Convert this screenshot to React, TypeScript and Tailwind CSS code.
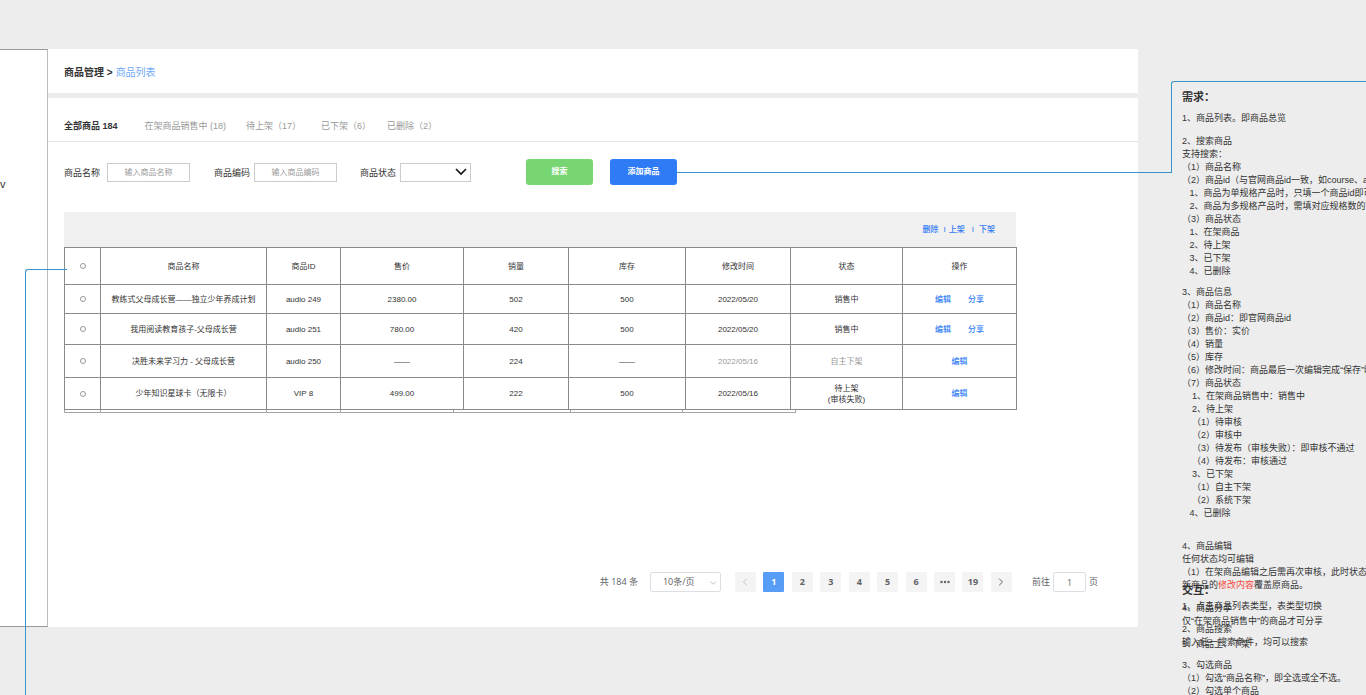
import React from "react";
import { ChevronDown, ChevronLeft, ChevronRight, Ellipsis } from "lucide-react";

const tabs = [
    { label: "全部商品 184", className: "font-bold text-[#333]" },
    { label: "在架商品销售中 (18)", className: "ml-[27px] text-[#999]" },
    { label: "待上架（17）", className: "ml-5 text-[#999]" },
    { label: "已下架（6）", className: "ml-5 text-[#999]" },
    { label: "已删除（2）", className: "ml-4 text-[#999]" },
];

const columns = [
    { title: "商品名称", width: "w-[166px]" },
    { title: "商品ID", width: "w-[74px]" },
    { title: "售价", width: "w-[123px]" },
    { title: "销量", width: "w-[105px]" },
    { title: "库存", width: "w-[117px]" },
    { title: "修改时间", width: "w-[105px]" },
    { title: "状态", width: "w-[112px]" },
    { title: "操作", width: "w-[114px]" },
];

const products = [
    {
        name: "教练式父母成长营——独立少年养成计划",
        id: "audio 249",
        price: "2380.00",
        sales: "502",
        stock: "500",
        date: "2022/05/20",
        status: ["销售中"],
        actions: ["编辑", "分享"],
        muted: false,
        height: "h-[29px]",
    },
    {
        name: "我用阅读教育孩子-父母成长营",
        id: "audio 251",
        price: "780.00",
        sales: "420",
        stock: "500",
        date: "2022/05/20",
        status: ["销售中"],
        actions: ["编辑", "分享"],
        muted: false,
        height: "h-[31px]",
    },
    {
        name: "决胜未来学习力 - 父母成长营",
        id: "audio 250",
        price: "——",
        sales: "224",
        stock: "——",
        date: "2022/05/16",
        status: ["自主下架"],
        actions: ["编辑"],
        muted: true,
        height: "h-[33px]",
    },
    {
        name: "少年知识星球卡（无限卡）",
        id: "VIP 8",
        price: "499.00",
        sales: "222",
        stock: "500",
        date: "2022/05/16",
        status: ["待上架", "(审核失败)"],
        actions: ["编辑"],
        muted: false,
        height: "h-[32px]",
    },
];

const pages = ["1", "2", "3", "4", "5", "6", "...", "19"];

const searchNotes = [
    "2、搜索商品",
    "支持搜索：",
    "（1）商品名称",
    "（2）商品id（与官网商品id一致，如course、audio）",
    "   1、商品为单规格产品时，只填一个商品id即可",
    "   2、商品为多规格产品时，需填对应规格数的商品id",
    "（3）商品状态",
    "   1、在架商品",
    "   2、待上架",
    "   3、已下架",
    "   4、已删除",
];

const infoNotes = [
    "3、商品信息",
    "（1）商品名称",
    "（2）商品id：即官网商品id",
    "（3）售价：实价",
    "（4）销量",
    "（5）库存",
    "（6）修改时间：商品最后一次编辑完成“保存”时间",
    "（7）商品状态",
    "    1、在架商品销售中：销售中",
    "    2、待上架",
    "    （1）待审核",
    "    （2）审核中",
    "    （3）待发布（审核失败）：即审核不通过",
    "    （4）待发布：审核通过",
    "    3、已下架",
    "    （1）自主下架",
    "    （2）系统下架",
    "   4、已删除",
];

function Lines({ items }: { items: string[] }) {
    return (
        <>
            {items.map((line, index) => (
                <p key={index}>{line}</p>
            ))}
        </>
    );
}

function Tabs() {
    return (
        <nav className="flex h-11 items-center border-b border-[#e4e4e4] pt-3.5 pl-4 text-[9px]">
            {tabs.map((tab) => (
                <a key={tab.label} href="#" className={tab.className}>
                    {tab.label}
                </a>
            ))}
        </nav>
    );
}

function SearchForm() {
    return (
        <form className="flex items-center pt-[17px] pl-4 text-[9px] text-[#333]">
            <label htmlFor="name" className="pt-1">商品名称</label>
            <input
                id="name"
                placeholder="输入商品名称"
                className="ml-[7px] h-[19px] w-[83px] border border-[#ccc] bg-white text-center text-[8px] placeholder:text-[#999]"
            />
            <label htmlFor="code" className="ml-6 pt-1">商品编码</label>
            <input
                id="code"
                placeholder="输入商品编码"
                className="ml-1 h-[19px] w-[83px] border border-[#ccc] bg-white text-center text-[8px] placeholder:text-[#999]"
            />
            <label htmlFor="status" className="ml-[23px] pt-1">商品状态</label>
            <div className="relative ml-1">
                <select
                    id="status"
                    className="block h-[19px] w-[71px] appearance-none border border-[#ccc] bg-white"
                ></select>
                <svg
                    viewBox="0 0 12 8"
                    className="pointer-events-none absolute top-[5px] right-[4px] h-2 w-3"
                    fill="none"
                    stroke="#111"
                    strokeWidth="1.6"
                >
                    <path d="M1 1l5 5 5-5" />
                </svg>
            </div>
            <button type="button" className="ml-[55px] h-[26px] w-[67px] rounded-[3px] bg-[#77d572] text-[8px] font-bold text-white">
                搜索
            </button>
            <button type="button" className="ml-[17px] h-[26px] w-[67px] rounded-[3px] bg-[#2f7bf6] text-[8px] font-bold text-white">
                添加商品
            </button>
        </form>
    );
}

function ProductTable() {
    return (
        <div className="mt-[27px] mr-[122px] ml-4">
            <div className="flex h-[35px] items-center justify-end bg-[#f0f0f0] pr-[21px] text-[8px] font-medium text-[#2f7bf6]">
                <button>删除</button>
                <span className="ml-[5px]">I</span>
                <button className="ml-[3px]">上架</button>
                <span className="ml-[7px]">I</span>
                <button className="ml-[5px]">下架</button>
            </div>

            <table className="w-full table-fixed border-collapse text-center text-[8px] leading-[11px] text-[#333]">
                <thead>
                    <tr className="h-[37px]">
                        <th className="w-9 border border-[#8a8a8a] p-0">
                            <input
                                type="checkbox"
                                aria-label="全选"
                                className="block size-1.5 mx-auto appearance-none rounded-full border border-[#999]"
                            />
                        </th>
                        {columns.map((column) => (
                            <th key={column.title} className={`${column.width} border border-[#8a8a8a] p-0 font-normal`}>
                                {column.title}
                            </th>
                        ))}
                    </tr>
                </thead>
                <tbody>
                    {products.map((product) => (
                        <tr key={product.id} className={product.height}>
                            <td className="border border-[#8a8a8a] p-0">
                                <input
                                    type="checkbox"
                                    aria-label={product.name}
                                    className="block size-1.5 mx-auto appearance-none rounded-full border border-[#999]"
                                />
                            </td>
                            <td className="border border-[#8a8a8a] p-0">{product.name}</td>
                            <td className="border border-[#8a8a8a] p-0">{product.id}</td>
                            <td className="border border-[#8a8a8a] p-0">{product.price}</td>
                            <td className="border border-[#8a8a8a] p-0">{product.sales}</td>
                            <td className="border border-[#8a8a8a] p-0">{product.stock}</td>
                            <td className={`border border-[#8a8a8a] p-0 ${product.muted ? "text-[#999]" : ""}`}>
                                {product.date}
                            </td>
                            <td className={`border border-[#8a8a8a] p-0 ${product.muted ? "text-[#999]" : ""}`}>
                                <Lines items={product.status} />
                            </td>
                            <td className="border border-[#8a8a8a] p-0">
                                <div className="flex justify-center gap-[17px] font-medium text-[#2f7bf6]">
                                    {product.actions.map((action) => (
                                        <a key={action} href="#">{action}</a>
                                    ))}
                                </div>
                            </td>
                        </tr>
                    ))}
                </tbody>
            </table>

            {/* Edge of the table underneath */}
            <div className="flex h-[3px] w-[732px] border-b border-l border-[#a5a5a5]">
                <span className="w-9 border-r border-[#a5a5a5]"></span>
                <span className="w-[166px] border-r border-[#a5a5a5]"></span>
                <span className="w-[74px] border-r border-[#a5a5a5]"></span>
                <span className="w-[113px] border-r border-[#a5a5a5]"></span>
                <span className="w-[117px] border-r border-[#a5a5a5]"></span>
                <span className="w-[112px] border-r border-[#a5a5a5]"></span>
                <span className="flex-1 border-r border-[#a5a5a5]"></span>
            </div>
        </div>
    );
}

function Pagination() {
    return (
        <div className="mt-[159px] flex h-5 items-center justify-end pr-10 font-['Open_Sans','Noto_Sans_CJK_SC',sans-serif] text-[9px] text-[#606266]">
            <span>共 184 条</span>
            <div className="relative ml-3">
                <select
                    aria-label="每页条数"
                    className="block h-5 w-[71px] appearance-none rounded-[2px] border border-[#dcdfe6] bg-white pl-3 text-[9px]"
                >
                    <option>10条/页</option>
                </select>
                <ChevronDown className="pointer-events-none absolute top-[6px] right-[3px] size-2.5 text-[#b4b8c0]" />
            </div>
            <div className="ml-[14px] flex w-[277px] justify-between font-bold">
                <button aria-label="上一页" className="flex h-5 w-[21px] items-center justify-center rounded-[1px] bg-[#f4f4f5] text-[#c0c4cc]">
                    <ChevronLeft className="size-3" />
                </button>
                {pages.map((page) => (
                    <button
                        key={page}
                        className={`flex h-5 w-[21px] items-center justify-center rounded-[1px] ${page === "1" ? "bg-[#579df8] text-white" : "bg-[#f4f4f5]"}`}
                    >
                        {page === "..." ? <Ellipsis className="size-3" strokeWidth={3} /> : page}
                    </button>
                ))}
                <button aria-label="下一页" className="flex h-5 w-[21px] items-center justify-center rounded-[1px] bg-[#f4f4f5]">
                    <ChevronRight className="size-3" />
                </button>
            </div>
            <label htmlFor="page" className="ml-5">前往</label>
            <input
                id="page"
                defaultValue="1"
                className="mx-[3px] h-5 w-[33px] rounded-[2px] border border-[#dcdfe6] bg-white text-center"
            />
            <span>页</span>
        </div>
    );
}

function Notes() {
    return (
        <aside className="relative w-[184px] shrink-0 pt-[91px] text-[9px] leading-[13px] whitespace-pre text-[#333]">
            <h2 className="text-[11px] font-bold">需求：</h2>
            <p className="mt-2">1、商品列表。即商品总览</p>
            <div className="mt-2.5">
                <Lines items={searchNotes} />
            </div>
            <div className="mt-2">
                <Lines items={infoNotes} />
            </div>
            <div className="mt-5">
                <p>4、商品编辑</p>
                <p>任何状态均可编辑</p>
                <p>（1）在架商品编辑之后需再次审核，此时状态</p>
                <p>
                    新商品的<span className="text-[#f5473b]">修改内容</span>覆盖原商品。
                </p>
            </div>
            <div className="mt-2.5">
                <p>4、商品分享</p>
                <p>仅“在架商品销售中”的商品才可分享</p>
            </div>
            <p className="mt-2.5">5、商品上、下架</p>

            {/* Interaction notes sit on top of the last requirements */}
            <div className="absolute top-[584px] left-0">
                <h2 className="text-[11px] font-bold">交互：</h2>
                <p className="mt-[3px]">1、点击商品列表类型，表类型切换</p>
                <div className="mt-2.5">
                    <p>2、商品搜索</p>
                    <p>输入任一搜索条件，均可以搜索</p>
                </div>
                <div className="mt-2.5">
                    <p>3、勾选商品</p>
                    <p>（1）勾选“商品名称”，即全选或全不选。</p>
                    <p>（2）勾选单个商品</p>
                </div>
            </div>
        </aside>
    );
}

function App() {
    return (
        <div className="relative flex h-screen items-start overflow-hidden bg-[#ededed] font-['Liberation_Sans','Noto_Sans_CJK_SC',sans-serif]">
            <div className="mt-[49px] h-[578px] w-12 shrink-0 border-y border-r border-y-[#999] border-r-[#bbb] bg-white pt-[126px] text-[11px] text-[#333]">
                v
            </div>

            <main className="mr-11 min-w-0 flex-1 pt-[49px]">
                <header className="flex h-11 items-center bg-white pt-0.5 pl-4 text-[10px] font-bold text-[#333]">
                    商品管理 &gt;
                    <a href="#" className="ml-[3px] font-normal text-[#6eaaf8]">商品列表</a>
                </header>
                <div className="mt-[5px] bg-white pb-[35px]">
                    <Tabs />
                    <SearchForm />
                    <ProductTable />
                    <Pagination />
                </div>
            </main>

            <Notes />

            {/* Connector lines */}
            <div className="absolute top-[172px] right-[195px] left-[677px] h-px bg-[#3a94cc]"></div>
            <div className="absolute top-[81px] right-0 h-[92px] w-[195px] rounded-tl-[3px] border-t border-l border-t-[#3a94cc] border-l-[#3a94cc]"></div>
            <div className="absolute top-[269px] bottom-0 left-[25px] w-[42px] rounded-tl-[3px] border-t border-l border-t-[#3a94cc] border-l-[#3a94cc]"></div>
        </div>
    );
}

export default App;
